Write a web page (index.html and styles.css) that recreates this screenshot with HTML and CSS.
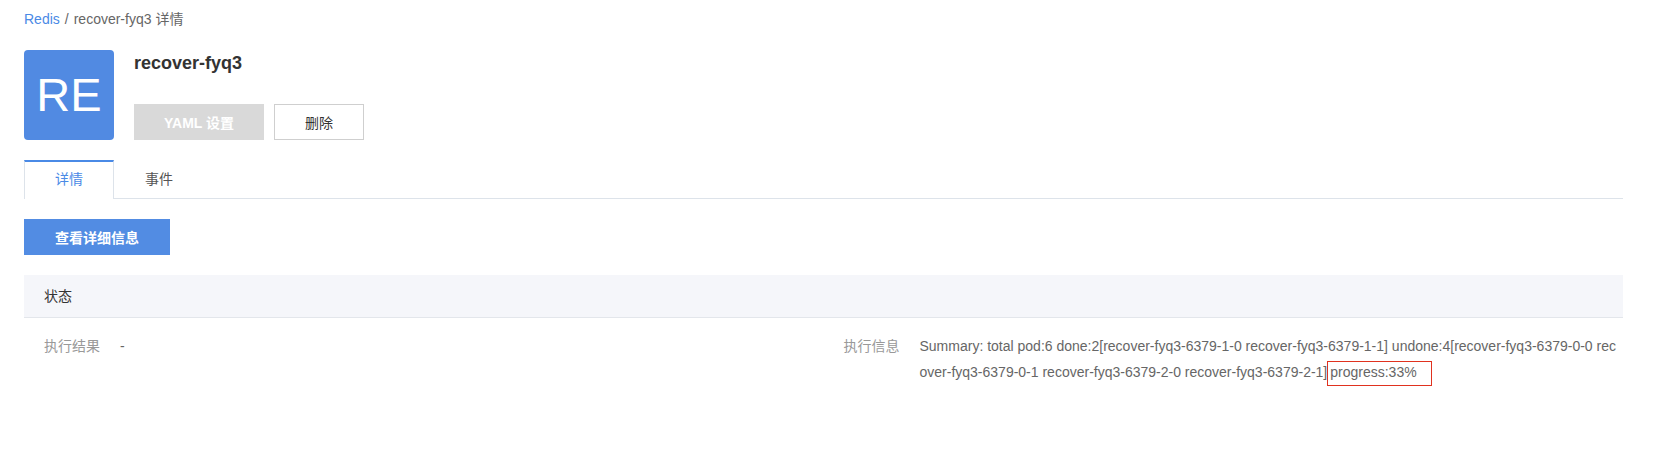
FILE: index.html
```html
<!DOCTYPE html>
<html lang="zh">
<head>
<meta charset="utf-8">
<title>recover-fyq3 详情</title>
<link rel="stylesheet" href="styles.css">
</head>
<body>
<div class="page">
  <div class="breadcrumb">
    <a class="crumb-link" href="#">Redis</a>
    <span class="crumb-sep">/</span>
    <span class="crumb-current">recover-fyq3 详情</span>
  </div>

  <div class="header">
    <div class="avatar">RE</div>
    <div class="info">
      <div class="title">recover-fyq3</div>
      <div class="actions">
        <button class="btn btn-disabled" type="button">YAML 设置</button>
        <button class="btn btn-default" type="button">删除</button>
      </div>
    </div>
  </div>

  <div class="tabs">
    <div class="tab tab-active">详情</div>
    <div class="tab">事件</div>
  </div>

  <div class="toolbar">
    <button class="btn btn-primary" type="button">查看详细信息</button>
  </div>

  <div class="panel">
    <div class="panel-head">状态</div>
    <div class="panel-body">
      <div class="field">
        <span class="field-label">执行结果</span>
        <span class="field-value">-</span>
      </div>
      <div class="field">
        <span class="field-label">执行信息</span>
        <span class="field-value">Summary: total pod:6 done:2[recover-fyq3-6379-1-0 recover-fyq3-6379-1-1] undone:4[recover-fyq3-6379-0-0 recover-fyq3-6379-0-1 recover-fyq3-6379-2-0 recover-fyq3-6379-2-1]<span class="mark">progress:33%</span></span>
      </div>
    </div>
  </div>
</div>
</body>
</html>
```

FILE: styles.css
```css
* { box-sizing: border-box; }

html, body {
  margin: 0;
  padding: 0;
  background: #fff;
}

body {
  font-family: "Liberation Sans", "Noto Sans CJK SC", sans-serif;
  font-size: 14px;
  color: #666;
}

.page {
  padding: 9px 41px 0 24px;
}

.breadcrumb {
  display: flex;
  align-items: center;
  height: 20px;
  line-height: 20px;
  font-size: 14px;
  color: #666;
}

.crumb-link {
  color: #4a8ae6;
  text-decoration: none;
}

.crumb-sep {
  margin: 0 5px;
  color: #666;
}

.header {
  display: flex;
  margin-top: 21px;
}

.avatar {
  width: 90px;
  height: 90px;
  border-radius: 4px;
  background: #518ae2;
  color: #fff;
  font-size: 47px;
  line-height: 90px;
  text-align: center;
  flex-shrink: 0;
}

.info {
  display: flex;
  flex-direction: column;
  justify-content: space-between;
  margin-left: 20px;
  height: 90px;
}

.title {
  font-size: 18px;
  font-weight: bold;
  line-height: 26px;
  color: #333;
}

.actions {
  display: flex;
  gap: 10px;
}

.btn {
  height: 36px;
  font-family: inherit;
  font-size: 14px;
  border: 1px solid transparent;
  border-radius: 0;
  cursor: pointer;
  padding: 0;
}

.btn-disabled {
  width: 130px;
  background: #d9d9d9;
  border-color: #d9d9d9;
  color: #fff;
  font-weight: bold;
  cursor: not-allowed;
}

.btn-default {
  width: 90px;
  background: #fff;
  border-color: #cfcfcf;
  color: #333;
}

.tabs {
  display: flex;
  margin-top: 20px;
  height: 39px;
  border-bottom: 1px solid #dde3ea;
}

.tab {
  width: 90px;
  height: 38px;
  line-height: 34px;
  text-align: center;
  font-size: 14px;
  color: #555;
  border-top: 2px solid transparent;
  border-left: 1px solid transparent;
  border-right: 1px solid transparent;
}

.tab-active {
  height: 39px;
  color: #4a8ae6;
  background: #fff;
  border-top-color: #4a8ae6;
  border-left-color: #dde3ea;
  border-right-color: #dde3ea;
}

.toolbar {
  margin-top: 20px;
}

.btn-primary {
  width: 146px;
  background: #528ce3;
  border-color: #528ce3;
  color: #fff;
  font-size: 14px;
  font-weight: bold;
}

.panel {
  margin-top: 20px;
}

.panel-head {
  height: 43px;
  line-height: 42px;
  padding-left: 20px;
  background: #f5f6fa;
  border-bottom: 1px solid #e3e6eb;
  color: #333;
  font-size: 14px;
}

.panel-body {
  display: grid;
  grid-template-columns: 1fr 1fr;
  padding-top: 15px;
}

.field {
  display: flex;
  padding-left: 20px;
  line-height: 26px;
}

.field-label {
  flex-shrink: 0;
  margin-right: 20px;
  color: #999;
}

.field-value {
  flex: 1;
  min-width: 0;
  color: #666;
  word-break: break-all;
}

.mark {
  display: inline-block;
  border: 1px solid #e0321f;
  padding: 0 14px 3px 2px;
  line-height: 20px;
}
```
